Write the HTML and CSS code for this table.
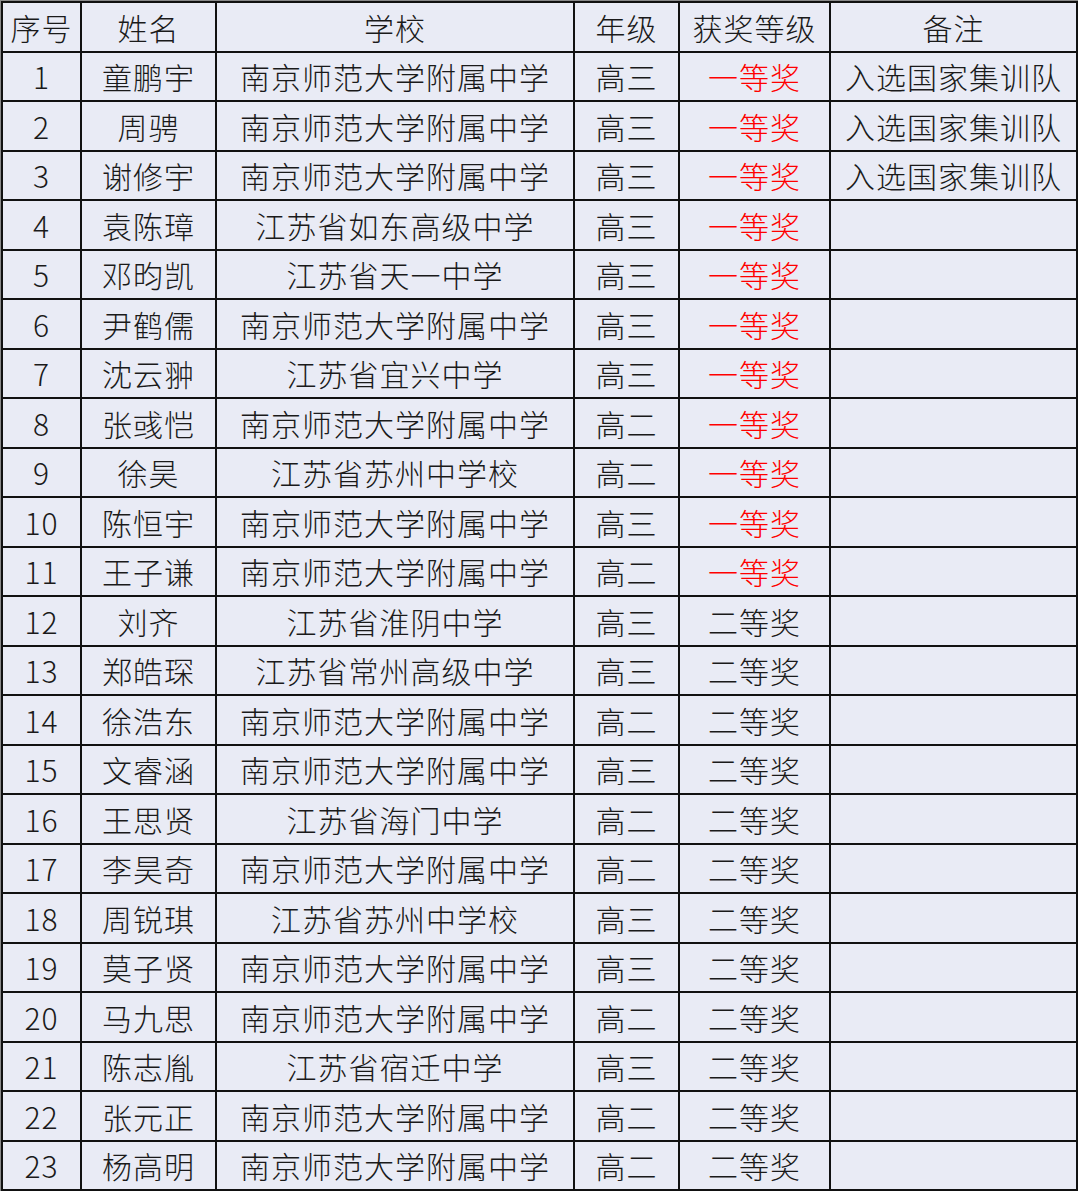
FILE: index.html
```html
<!DOCTYPE html>
<html lang="zh-CN">
<head>
<meta charset="utf-8">
<title>获奖名单</title>
<link rel="stylesheet" href="styles.css">
</head>
<body>
<div class="frame">
<div class="table">
  <div class="c">序号</div><div class="c">姓名</div><div class="c">学校</div><div class="c">年级</div><div class="c">获奖等级</div><div class="c">备注</div>
  <div class="c">1</div><div class="c">童鹏宇</div><div class="c">南京师范大学附属中学</div><div class="c">高三</div><div class="c red">一等奖</div><div class="c">入选国家集训队</div>
  <div class="c">2</div><div class="c">周骋</div><div class="c">南京师范大学附属中学</div><div class="c">高三</div><div class="c red">一等奖</div><div class="c">入选国家集训队</div>
  <div class="c">3</div><div class="c">谢修宇</div><div class="c">南京师范大学附属中学</div><div class="c">高三</div><div class="c red">一等奖</div><div class="c">入选国家集训队</div>
  <div class="c">4</div><div class="c">袁陈璋</div><div class="c">江苏省如东高级中学</div><div class="c">高三</div><div class="c red">一等奖</div><div class="c"></div>
  <div class="c">5</div><div class="c">邓昀凯</div><div class="c">江苏省天一中学</div><div class="c">高三</div><div class="c red">一等奖</div><div class="c"></div>
  <div class="c">6</div><div class="c">尹鹤儒</div><div class="c">南京师范大学附属中学</div><div class="c">高三</div><div class="c red">一等奖</div><div class="c"></div>
  <div class="c">7</div><div class="c">沈云翀</div><div class="c">江苏省宜兴中学</div><div class="c">高三</div><div class="c red">一等奖</div><div class="c"></div>
  <div class="c">8</div><div class="c">张彧恺</div><div class="c">南京师范大学附属中学</div><div class="c">高二</div><div class="c red">一等奖</div><div class="c"></div>
  <div class="c">9</div><div class="c">徐昊</div><div class="c">江苏省苏州中学校</div><div class="c">高二</div><div class="c red">一等奖</div><div class="c"></div>
  <div class="c">10</div><div class="c">陈恒宇</div><div class="c">南京师范大学附属中学</div><div class="c">高三</div><div class="c red">一等奖</div><div class="c"></div>
  <div class="c">11</div><div class="c">王子谦</div><div class="c">南京师范大学附属中学</div><div class="c">高二</div><div class="c red">一等奖</div><div class="c"></div>
  <div class="c">12</div><div class="c">刘齐</div><div class="c">江苏省淮阴中学</div><div class="c">高三</div><div class="c">二等奖</div><div class="c"></div>
  <div class="c">13</div><div class="c">郑皓琛</div><div class="c">江苏省常州高级中学</div><div class="c">高三</div><div class="c">二等奖</div><div class="c"></div>
  <div class="c">14</div><div class="c">徐浩东</div><div class="c">南京师范大学附属中学</div><div class="c">高二</div><div class="c">二等奖</div><div class="c"></div>
  <div class="c">15</div><div class="c">文睿涵</div><div class="c">南京师范大学附属中学</div><div class="c">高三</div><div class="c">二等奖</div><div class="c"></div>
  <div class="c">16</div><div class="c">王思贤</div><div class="c">江苏省海门中学</div><div class="c">高二</div><div class="c">二等奖</div><div class="c"></div>
  <div class="c">17</div><div class="c">李昊奇</div><div class="c">南京师范大学附属中学</div><div class="c">高二</div><div class="c">二等奖</div><div class="c"></div>
  <div class="c">18</div><div class="c">周锐琪</div><div class="c">江苏省苏州中学校</div><div class="c">高三</div><div class="c">二等奖</div><div class="c"></div>
  <div class="c">19</div><div class="c">莫子贤</div><div class="c">南京师范大学附属中学</div><div class="c">高三</div><div class="c">二等奖</div><div class="c"></div>
  <div class="c">20</div><div class="c">马九思</div><div class="c">南京师范大学附属中学</div><div class="c">高二</div><div class="c">二等奖</div><div class="c"></div>
  <div class="c">21</div><div class="c">陈志胤</div><div class="c">江苏省宿迁中学</div><div class="c">高三</div><div class="c">二等奖</div><div class="c"></div>
  <div class="c">22</div><div class="c">张元正</div><div class="c">南京师范大学附属中学</div><div class="c">高二</div><div class="c">二等奖</div><div class="c"></div>
  <div class="c">23</div><div class="c">杨高明</div><div class="c">南京师范大学附属中学</div><div class="c">高二</div><div class="c">二等奖</div><div class="c"></div>
</div>
</div>
</body>
</html>
```
FILE: styles.css
```css
html, body {
  margin: 0;
  padding: 0;
  background: #ffffff;
}
.frame {
  display: inline-block;
  background: #8a8a8a;
  padding: 1px 0 0 1px;
}
.table {
  display: grid;
  grid-template-columns: 77px 133px 356px 103px 149px 245px;
  grid-auto-rows: 47.5px;
  gap: 2px;
  padding: 2px;
  background: #111111;
  font-family: "Noto Sans CJK SC", "Noto Sans", sans-serif;
  font-weight: 300;
  font-size: 30px;
  color: #1a1a1a;
}
.c {
  background: #e9ebf5;
  display: flex;
  align-items: center;
  justify-content: center;
  white-space: nowrap;
  letter-spacing: 1px;
  line-height: 1;
}
.red {
  color: #ff0000;
}
```
